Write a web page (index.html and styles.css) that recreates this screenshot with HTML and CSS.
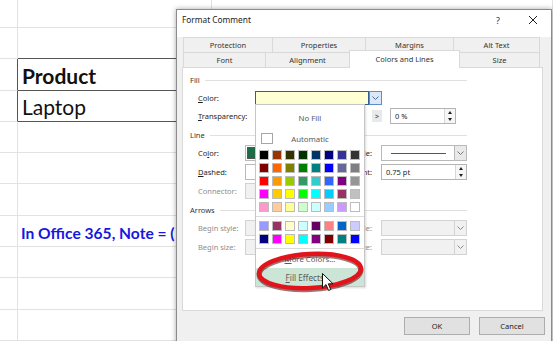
FILE: index.html
```html
<!DOCTYPE html>
<html lang="en">
<head>
    <meta charset="UTF-8">
    <meta name="viewport" content="width=device-width, initial-scale=1.0">
    <title>Format Comment</title>
    <link rel="stylesheet" href="styles.css">
</head>
<body>
    <div class="sheet">
        <div class="row first"><div class="c a"></div><div class="c b"></div><div class="c rest"></div></div>
        <div class="row above"><div class="c a"></div><div class="c b"></div><div class="c rest"></div></div>
        <div class="row boxed product"><div class="c a"></div><div class="c b">Product</div><div class="c rest"></div></div>
        <div class="row boxed"><div class="c a"></div><div class="c b">Laptop</div><div class="c rest"></div></div>
        <div class="row"><div class="c a"></div><div class="c b"></div><div class="c rest"></div></div>
        <div class="row"><div class="c a"></div><div class="c b"></div><div class="c rest"></div></div>
        <div class="row"><div class="c a"></div><div class="c b"></div><div class="c rest"></div></div>
        <div class="row note"><div class="c a"></div><div class="c b">In Office 365, Note = (</div><div class="c rest"></div></div>
        <div class="row"><div class="c a"></div><div class="c b"></div><div class="c rest"></div></div>
        <div class="row"><div class="c a"></div><div class="c b"></div><div class="c rest"></div></div>
        <div class="row"><div class="c a"></div><div class="c b"></div><div class="c rest"></div></div>
    </div>

    <div class="dialog">
        <div class="titlebar">
            <span class="title">Format Comment</span>
            <span class="tb-btn help">?</span>
            <span class="tb-btn close">
                <svg width="10" height="10" viewBox="0 0 10 10"><path d="M1 1L9 9M9 1L1 9" stroke="#222" stroke-width="1"/></svg>
            </span>
        </div>

        <div class="tabs">
            <div class="tabrow">
                <div class="tab" style="width:90px">Protection</div>
                <div class="tab" style="width:94px">Properties</div>
                <div class="tab" style="width:89px">Margins</div>
                <div class="tab" style="width:87px">Alt Text</div>
            </div>
            <div class="tabrow">
                <div class="tab" style="width:83px">Font</div>
                <div class="tab" style="width:85px">Alignment</div>
                <div class="tab active" style="width:111px">Colors and Lines</div>
                <div class="tab" style="width:81px">Size</div>
            </div>
        </div>

        <div class="panel">
            <div class="group-head"><span>Fill</span></div>
            <div class="frow fill-color">
                <span class="lbl wide"><u>C</u>olor:</span>
                <div class="combo fillbox">
                    <div class="field yellow"></div>
                    <div class="drop focus">
                        <svg width="7" height="4" viewBox="0 0 7 4"><path d="M0.5 0.5L3.5 3.5L6.5 0.5" fill="none" stroke="#4a6f9c"/></svg>
                    </div>
                </div>
            </div>
            <div class="frow">
                <span class="lbl wide"><u>T</u>ransparency:</span>
                <div class="slider">
                    <span class="sbtn">&lt;</span>
                    <span class="track"></span>
                    <span class="sbtn">&gt;</span>
                </div>
                <div class="spin short">
                    <span class="val">0 %</span>
                    <div class="arrows"><i class="up"></i><i class="dn"></i></div>
                </div>
            </div>

            <div class="group-head line-head"><span>Line</span></div>
            <div class="frow line-first">
                <span class="lbl">Co<u>l</u>or:</span>
                <div class="combo left"><div class="field"><span class="swatch-green"></span></div></div>
                <span class="rlabel">Style:</span>
                <div class="combo right">
                    <div class="field"><span class="stroke"></span></div>
                    <div class="drop">
                        <svg width="7" height="4" viewBox="0 0 7 4"><path d="M0.5 0.5L3.5 3.5L6.5 0.5" fill="none" stroke="#777"/></svg>
                    </div>
                </div>
            </div>
            <div class="frow">
                <span class="lbl"><u>D</u>ashed:</span>
                <div class="combo left"><div class="field"></div></div>
                <span class="rlabel">Weight:</span>
                <div class="spin">
                    <span class="val">0.75 pt</span>
                    <div class="arrows"><i class="up"></i><i class="dn"></i></div>
                </div>
            </div>
            <div class="frow off">
                <span class="lbl">Connector:</span>
                <div class="combo left"><div class="field"></div></div>
            </div>

            <div class="group-head"><span>Arrows</span></div>
            <div class="frow off arrows-first">
                <span class="lbl">Begin style:</span>
                <div class="combo left"><div class="field"></div></div>
                <span class="rlabel">End style:</span>
                <div class="combo right">
                    <div class="field"></div>
                    <div class="drop">
                        <svg width="7" height="4" viewBox="0 0 7 4"><path d="M0.5 0.5L3.5 3.5L6.5 0.5" fill="none" stroke="#888"/></svg>
                    </div>
                </div>
            </div>
            <div class="frow off">
                <span class="lbl">Begin size:</span>
                <div class="combo left"><div class="field"></div></div>
                <span class="rlabel">End size:</span>
                <div class="combo right">
                    <div class="field"></div>
                    <div class="drop">
                        <svg width="7" height="4" viewBox="0 0 7 4"><path d="M0.5 0.5L3.5 3.5L6.5 0.5" fill="none" stroke="#888"/></svg>
                    </div>
                </div>
            </div>

            <!-- colour picker opened from the Fill colour box -->
            <div class="popup">
                <div class="pop-item">No Fill</div>
                <div class="pop-item auto"><span class="check"></span>Automatic</div>
                <div class="swatches">
                    <i style="background:#000000"></i><i style="background:#993300"></i><i style="background:#333300"></i><i style="background:#003300"></i><i style="background:#003366"></i><i style="background:#000080"></i><i style="background:#333399"></i><i style="background:#333333"></i>
                    <i style="background:#800000"></i><i style="background:#ff6600"></i><i style="background:#808000"></i><i style="background:#008000"></i><i style="background:#008080"></i><i style="background:#0000ff"></i><i style="background:#666699"></i><i style="background:#808080"></i>
                    <i style="background:#ff0000"></i><i style="background:#ff9900"></i><i style="background:#99cc00"></i><i style="background:#339966"></i><i style="background:#33cccc"></i><i style="background:#3366ff"></i><i style="background:#800080"></i><i style="background:#969696"></i>
                    <i style="background:#ff00ff"></i><i style="background:#ffcc00"></i><i style="background:#ffff00"></i><i style="background:#00ff00"></i><i style="background:#00ffff"></i><i style="background:#00ccff"></i><i style="background:#993366"></i><i style="background:#c0c0c0"></i>
                    <i style="background:#ff99cc"></i><i style="background:#ffcc99"></i><i style="background:#ffff99"></i><i style="background:#ccffcc"></i><i style="background:#ccffff"></i><i style="background:#99ccff"></i><i style="background:#cc99ff"></i><i style="background:#ffffff"></i>
                </div>
                <div class="sep"></div>
                <div class="swatches">
                    <i style="background:#9999ff"></i><i style="background:#993366"></i><i style="background:#ffffcc"></i><i style="background:#ccffff"></i><i style="background:#660066"></i><i style="background:#ff8080"></i><i style="background:#0066cc"></i><i style="background:#ccccff"></i>
                    <i style="background:#000080"></i><i style="background:#ff00ff"></i><i style="background:#ffff00"></i><i style="background:#00ffff"></i><i style="background:#800080"></i><i style="background:#800000"></i><i style="background:#008080"></i><i style="background:#0000ff"></i>
                </div>
                <div class="sep last"></div>
                <div class="pop-item more"><u>M</u>ore Colors...</div>
                <div class="pop-item effects"><u>F</u>ill Effects...</div>
            </div>
        </div>

        <div class="buttons">
            <button type="button">OK</button>
            <button type="button">Cancel</button>
        </div>
    </div>

    <svg class="ring" width="124" height="52" viewBox="0 0 124 52">
        <ellipse cx="58" cy="26.5" rx="51" ry="17" transform="rotate(-3 58 26)" fill="none" stroke="#4a0606" stroke-opacity="0.55" stroke-width="5"/>
        <ellipse cx="58" cy="25" rx="51" ry="17" transform="rotate(-3 58 25)" fill="none" stroke="#e3131b" stroke-width="4.5"/>
    </svg>

    <svg class="cursor" width="13" height="19" viewBox="0 0 13 19">
        <path d="M0.5 0.5L0.5 15L4 11.6L6.6 17.5L8.8 16.6L6.3 10.8L11 10.8Z" fill="#fff" stroke="#111" stroke-width="1"/>
    </svg>
</body>
</html>
```

FILE: styles.css
```css
* {
    box-sizing: border-box;
}
body {
    margin: 0;
    width: 553px;
    height: 341px;
    overflow: hidden;
    position: relative;
    background-color: #fff;
    font-family: Lato, "Open Sans", sans-serif;
}

/* spreadsheet behind the dialog */
.row {
    display: flex;
    height: 31.3px;
}
.row.first {
    height: 28px;
}
.c {
    border-right: 1px solid #e2e2e2;
    border-bottom: 1px solid #e2e2e2;
}
.a {
    width: 18px;
}
.b {
    width: 194px;
    display: flex;
    align-items: center;
    padding-left: 4px;
    white-space: nowrap;
    color: #111;
}
.rest {
    flex: 1;
}
.above .b,
.boxed .b {
    border-bottom-color: #555;
}
.boxed .a {
    border-right-color: #555;
}
.boxed .b {
    font-size: 21px;
    padding-top: 2px;
}
.product .b {
    font-weight: bold;
}
.note .b {
    color: #1717e3;
    font-weight: bold;
    font-size: 15.6px;
    align-items: flex-end;
    padding-left: 3px;
    padding-bottom: 4px;
}

/* dialog */
.dialog {
    position: absolute;
    left: 176px;
    top: 9px;
    width: 376px;
    height: 345px;
    background-color: #f0f0f0;
    border: 1px solid #8c8c8c;
    box-shadow: 0px 0px 5px rgba(0, 0, 0, 0.35);
    font-family: "Noto Sans", "Open Sans", sans-serif;
    font-size: 7.5px;
    color: #1e1e1e;
}
.titlebar {
    height: 27px;
    background-color: #fff;
    display: flex;
    align-items: flex-start;
    padding: 4px 3px 0 5px;
}
.title {
    font-size: 8.3px;
    line-height: 12px;
    color: #222;
}
.tb-btn {
    width: 30px;
    height: 12px;
    display: flex;
    justify-content: center;
    align-items: center;
    font-size: 9px;
    color: #333;
}
.help {
    margin-left: auto;
    margin-right: 5px;
}

.tabs {
    margin-left: 6px;
    width: 360px;
}
.tabrow {
    display: flex;
    height: 15px;
    padding-left: 1px;
}
.tab {
    border: 1px solid #d9d9d9;
    border-bottom: none;
    margin-left: -1px;
    display: flex;
    justify-content: center;
    align-items: center;
    color: #333;
}
.tab.active {
    background-color: #fff;
    height: 18px;
    margin-top: -2px;
    position: relative;
    z-index: 1;
    padding-bottom: 2px;
}

.panel {
    position: relative;
    margin-left: 5px;
    width: 361px;
    height: 244px;
    background-color: #fff;
    border: 1px solid #d9d9d9;
    padding: 6px 75px 0 7px;
}
.group-head {
    display: flex;
    align-items: center;
    height: 12px;
    color: #333;
}
.group-head::after {
    content: "";
    flex: 1;
    border-top: 1px solid #e0e0e0;
    margin-left: 5px;
}
.line-head {
    margin-top: 5px;
}
.group-head + .frow {
    margin-top: 4px;
}
.frow {
    display: flex;
    align-items: center;
    height: 16px;
    margin-top: 3px;
    padding-left: 8px;
}
.frow + .group-head {
    margin-top: 5px;
}
.frow.fill-color {
    height: 15px;
}
.lbl {
    width: 47px;
    flex-shrink: 0;
}
.lbl.wide {
    width: 57px;
}
.off .lbl,
.off .rlabel {
    color: #8d8d8d;
}
.rlabel {
    flex: 1;
    text-align: right;
    padding-right: 9px;
}

.combo {
    display: flex;
    height: 16px;
}
.combo .field {
    flex: 1;
    border: 1px solid #b9b9b9;
    background-color: #fff;
    display: flex;
    align-items: center;
}
.combo .drop {
    width: 12px;
    border: 1px solid #b9b9b9;
    border-left: none;
    background-color: #e9e9e9;
    display: flex;
    justify-content: center;
    align-items: center;
}
.fillbox {
    width: 127px;
    height: 14px;
}
.fillbox .field.yellow {
    background-color: #ffffd4;
    border-color: #2f5f96;
}
.fillbox .drop.focus {
    width: 13px;
    background-color: #dce8f5;
    border: 1px solid #5d8ec7;
}
.combo.left {
    width: 85px;
}
.combo.right {
    width: 86px;
}
.off .combo .field,
.off .combo .drop {
    background-color: #f1f1f1;
    border-color: #d3d3d3;
}
.swatch-green {
    width: 12px;
    height: 12px;
    margin-left: 1px;
    background-color: #1f6b47;
    border: 1px solid #555;
}
.stroke {
    width: 55px;
    margin-left: 9px;
    border-top: 1px solid #555;
}

.slider {
    width: 127px;
    display: flex;
    align-items: center;
    justify-content: space-between;
}
.sbtn {
    width: 10px;
    height: 12px;
    background-color: #e9e9e9;
    display: flex;
    justify-content: center;
    align-items: center;
    font-size: 7px;
    color: #333;
}
.spin {
    width: 86px;
    height: 16px;
    border: 1px solid #b3b3b3;
    background-color: #fff;
    display: flex;
}
.spin.short {
    width: 66px;
    margin-left: 8px;
}
.spin .val {
    flex: 1;
    display: flex;
    align-items: center;
    padding-left: 4px;
}
.spin .arrows {
    width: 11px;
    display: flex;
    flex-direction: column;
    justify-content: space-around;
    align-items: center;
    border-left: 1px solid #d6d6d6;
    background-color: #f6f6f6;
}
.arrows i {
    width: 0;
    height: 0;
    border-left: 2.5px solid transparent;
    border-right: 2.5px solid transparent;
}
.arrows .up {
    border-bottom: 3px solid #222;
}
.arrows .dn {
    border-top: 3px solid #222;
}

/* colour picker */
.popup {
    position: absolute;
    left: 72px;
    top: 36px;
    width: 110px;
    height: 183px;
    background-color: #fff;
    border: 1px solid #c6c6c6;
    box-shadow: 1px 1px 2px rgba(0, 0, 0, 0.15);
    padding-top: 2px;
    z-index: 5;
}
.pop-item {
    position: relative;
    height: 22px;
    display: flex;
    justify-content: center;
    align-items: center;
    color: #5a5a5a;
    font-size: 7.8px;
}
.pop-item.auto {
    height: 19px;
}
.check {
    position: absolute;
    left: 5px;
    top: 4px;
    width: 12px;
    height: 11px;
    border: 1px solid #a6a6a6;
    background-color: #fff;
}
.swatches {
    display: grid;
    grid-template-columns: repeat(8, 10px);
    grid-auto-rows: 10px;
    gap: 3px;
    padding-left: 3px;
    margin-top: 2px;
}
.swatches i {
    border: 1px solid #bcbcbc;
}
.sep {
    margin: 4px 0 4px;
    border-top: 1px solid #dadada;
}
.sep.last {
    margin-bottom: 0;
}
.sep + .swatches {
    margin-top: 0;
}
.pop-item.more {
    height: 19px;
}
.pop-item.effects {
    height: 18px;
    background-color: #cbe6d6;
    padding-right: 4px;
    font-size: 8.2px;
}

.buttons {
    display: flex;
    justify-content: flex-end;
    gap: 9px;
    margin-top: 6px;
    padding-right: 6px;
}
.buttons button {
    width: 66px;
    height: 18px;
    background-color: #e1e1e1;
    border: 1px solid #adadad;
    font-family: "Noto Sans", sans-serif;
    font-size: 7.5px;
    color: #222;
    padding: 0;
}

/* annotation drawn over the screenshot */
.ring {
    position: absolute;
    left: 252px;
    top: 246px;
    z-index: 10;
}
.cursor {
    position: absolute;
    left: 322px;
    top: 273px;
    z-index: 11;
}
```
